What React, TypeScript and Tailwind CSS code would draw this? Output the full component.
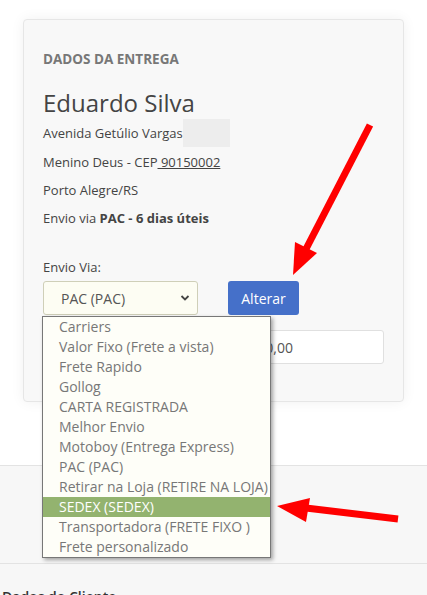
import React from 'react';

const options = [
  'Carriers',
  'Valor Fixo (Frete a vista)',
  'Frete Rapido',
  'Gollog',
  'CARTA REGISTRADA',
  'Melhor Envio',
  'Motoboy (Entrega Express)',
  'PAC (PAC)',
  'Retirar na Loja (RETIRE NA LOJA)',
  'SEDEX (SEDEX)',
  'Transportadora (FRETE FIXO )',
  'Frete personalizado',
];

const App: React.FC = () => {
  return (
    <div
      className="relative w-[427px] h-[595px] overflow-hidden bg-white text-[#444]"
      style={{ fontFamily: '"Open Sans", "Noto Sans", sans-serif' }}
    >
      {/* card */}
      <div className="pt-[19px] pl-[23px] h-[465px]">
        <div className="relative w-[381px] h-[383px] bg-[#f8f8f8] border border-[#e6e6e6] rounded-[4px] shadow-[0_0_14px_rgba(0,0,0,0.06)] pt-[31px] pl-[19px] pr-[19px]">
          <h3 className="text-[13.5px] leading-[17px] font-bold text-[#777]">DADOS DA ENTREGA</h3>
          <h2 className="mt-[19px] text-[24px] leading-[31px] text-[#444]">Eduardo Silva</h2>
          <div className="mt-[6px] flex items-center h-[18px] text-[13px] leading-[18px] text-[#444]">
            <span>Avenida Getúlio Vargas</span>
            <span className="w-[47px] h-[28px] bg-[#ededed]" />
          </div>
          <p className="mt-[11px] text-[13px] leading-[18px]">
            Menino Deus - CEP<span className="underline"> 90150002</span>
          </p>
          <p className="mt-[10px] text-[13px] leading-[18px]">Porto Alegre/RS</p>
          <p className="mt-[10px] text-[13px] leading-[18px]">
            Envio via <b>PAC - 6 dias úteis</b>
          </p>
          <p className="mt-[31px] text-[13px] leading-[18px]">Envio Via:</p>
          <div className="mt-[5px] flex items-center gap-[30px]">
            <div className="relative w-[155px] h-[34px] bg-[#fdfdf3] border border-[#cfcfb8] rounded-[3px] flex items-center pl-[17px] text-[14px] text-[#555]">
              PAC (PAC)
              <svg className="absolute right-[7px] top-[12px]" width="10" height="8" viewBox="0 0 10 8">
                <path d="M1.5 2 L5 5.5 L8.5 2" fill="none" stroke="#444" strokeWidth="1.8" />
              </svg>
            </div>
            <button className="w-[71px] h-[34px] bg-[#4570c9] rounded-[3px] text-white text-[14px]">Alterar</button>
          </div>
          <div className="mt-[15px] flex justify-end">
            <div className="w-[156px] h-[34px] bg-white border border-[#e0e0e0] rounded-[3px] flex items-center pl-[16px] text-[14px] text-[#555]">
              R$ 0,00
            </div>
          </div>
          {/* open dropdown */}
          <ul className="absolute left-[18px] top-[296px] w-[229px] bg-[#fefef8] border border-[#777] shadow-[2px_2px_4px_rgba(0,0,0,0.35)] z-10">
            {options.map((o) => (
              <li
                key={o}
                className={
                  o === 'SEDEX (SEDEX)'
                    ? 'h-[20px] leading-[20px] pl-[16px] text-[14px] whitespace-nowrap bg-[#93b36f] text-white'
                    : 'h-[20px] leading-[20px] pl-[16px] text-[14px] whitespace-nowrap text-[#777]'
                }
              >
                {o}
              </li>
            ))}
          </ul>
        </div>
      </div>

      <div className="border-t border-[#e3e3e3] bg-[#f7f7f7] h-[98px]" />
      <div className="border-t border-[#e3e3e3] bg-[#f7f7f7] h-[60px] pt-[22px] pl-[2px]">
        <p className="text-[14px] font-semibold text-[#333]">Dados do Cliente</p>
      </div>

      {/* annotation arrows */}
      <svg className="absolute left-0 top-0 pointer-events-none" width="427" height="595" viewBox="0 0 427 595">
        <line x1="370" y1="125" x2="306" y2="249" stroke="#ff0000" strokeWidth="7" />
        <polygon points="293,275 295,242 317,253" fill="#ff0000" />
        <line x1="398" y1="519" x2="306" y2="508" stroke="#ff0000" strokeWidth="7" />
        <polygon points="277,506 310,498 306,522" fill="#ff0000" />
      </svg>
    </div>
  );
};

export default App;
